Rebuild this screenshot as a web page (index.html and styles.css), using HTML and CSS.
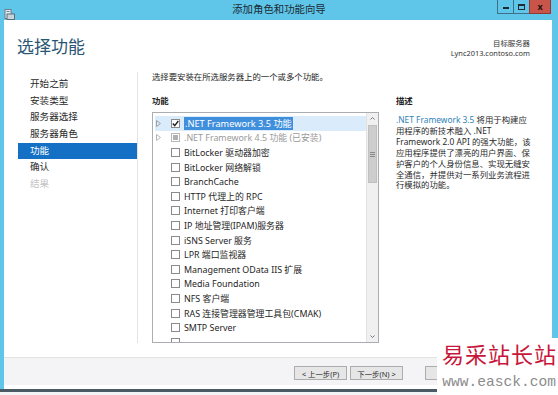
FILE: index.html
```html
<!DOCTYPE html>
<html lang="zh-CN">
<head>
  <meta charset="UTF-8">
  <title>添加角色和功能向导</title>
  <link rel="stylesheet" href="styles.css">
</head>
<body>
  <div class="window">
    <div class="titlebar">
      <div class="app-icon">
        <svg width="11" height="11" viewBox="0 0 11 11">
          <rect x="1" y="0.5" width="6" height="9" fill="#e9eef2" stroke="#6b7f8c" stroke-width="1"/>
          <rect x="3" y="5" width="7.5" height="5.5" fill="#c9d3da" stroke="#5d6f7b" stroke-width="1"/>
          <line x1="2.5" y1="2.5" x2="5.5" y2="2.5" stroke="#6b7f8c"/>
        </svg>
      </div>
      <div class="title">添加角色和功能向导</div>
      <div class="caption-btns">
        <span class="cap cap-min"><i></i></span>
        <span class="cap cap-max"><i></i></span>
        <span class="cap cap-close">x</span>
      </div>
    </div>

    <div class="client">
      <div class="header">
        <h1>选择功能</h1>
        <div class="target">
          <div>目标服务器</div>
          <div>Lync2013.contoso.com</div>
        </div>
      </div>

      <div class="main">
        <ul class="nav">
          <li>开始之前</li>
          <li>安装类型</li>
          <li>服务器选择</li>
          <li>服务器角色</li>
          <li class="active">功能</li>
          <li>确认</li>
          <li class="disabled">结果</li>
        </ul>

        <div class="content">
          <p class="intro">选择要安装在所选服务器上的一个或多个功能。</p>
          <div class="columns">
            <div class="features">
              <div class="label">功能</div>
              <div class="listbox">
                <div class="rows">
                  <div class="row selected">
                    <span class="exp"><svg width="5" height="7" viewBox="0 0 5 7"><path d="M0.5 0.5 L4.5 3.5 L0.5 6.5 Z" fill="none" stroke="#a0a0a0"/></svg></span>
                    <span class="cb checked"><svg width="7" height="7" viewBox="0 0 7 7"><path d="M0.8 3.6 L2.7 5.6 L6.3 1" fill="none" stroke="#222" stroke-width="1.4"/></svg></span>
                    <span class="text"><span class="hl">.NET Framework 3.5 功能</span></span>
                  </div>
                  <div class="row installed">
                    <span class="exp"><svg width="5" height="7" viewBox="0 0 5 7"><path d="M0.5 0.5 L4.5 3.5 L0.5 6.5 Z" fill="none" stroke="#b5b5b5"/></svg></span>
                    <span class="cb partial"><i></i></span>
                    <span class="text">.NET Framework 4.5 功能 (已安装)</span>
                  </div>
                  <div class="row"><span class="exp"></span><span class="cb"></span><span class="text">BitLocker 驱动器加密</span></div>
                  <div class="row"><span class="exp"></span><span class="cb"></span><span class="text">BitLocker 网络解锁</span></div>
                  <div class="row"><span class="exp"></span><span class="cb"></span><span class="text">BranchCache</span></div>
                  <div class="row"><span class="exp"></span><span class="cb"></span><span class="text">HTTP 代理上的 RPC</span></div>
                  <div class="row"><span class="exp"></span><span class="cb"></span><span class="text">Internet 打印客户端</span></div>
                  <div class="row"><span class="exp"></span><span class="cb"></span><span class="text">IP 地址管理(IPAM)服务器</span></div>
                  <div class="row"><span class="exp"></span><span class="cb"></span><span class="text">iSNS Server 服务</span></div>
                  <div class="row"><span class="exp"></span><span class="cb"></span><span class="text">LPR 端口监视器</span></div>
                  <div class="row"><span class="exp"></span><span class="cb"></span><span class="text">Management OData IIS 扩展</span></div>
                  <div class="row"><span class="exp"></span><span class="cb"></span><span class="text">Media Foundation</span></div>
                  <div class="row"><span class="exp"></span><span class="cb"></span><span class="text">NFS 客户端</span></div>
                  <div class="row"><span class="exp"></span><span class="cb"></span><span class="text">RAS 连接管理器管理工具包(CMAK)</span></div>
                  <div class="row"><span class="exp"></span><span class="cb"></span><span class="text">SMTP Server</span></div>
                  <div class="row"><span class="exp"></span><span class="cb"></span></div>
                </div>
                <div class="scrollbar">
                  <div class="sb-btn"><svg width="5" height="3" viewBox="0 0 5 3"><path d="M0.5 2.5 L2.5 0.5 L4.5 2.5" fill="none" stroke="#777"/></svg></div>
                  <div class="sb-thumb"><i></i><i></i><i></i></div>
                  <div class="sb-btn sb-down"><svg width="5" height="3" viewBox="0 0 5 3"><path d="M0.5 0.5 L2.5 2.5 L4.5 0.5" fill="none" stroke="#777"/></svg></div>
                </div>
              </div>
            </div>

            <div class="desc">
              <div class="label">描述</div>
              <p class="desc-text"><span class="link">.NET Framework 3.5</span> 将用于构建应<br>用程序的新技术融入 .NET<br>Framework 2.0 API 的强大功能，该<br>应用程序提供了漂亮的用户界面、保<br>护客户的个人身份信息、实现无缝安<br>全通信，并提供对一系列业务流程进<br>行模拟的功能。</p>
            </div>
          </div>
        </div>
      </div>

      <div class="footer">
        <button class="btn">&lt; 上一步(P)</button>
        <button class="btn">下一步(N) &gt;</button>
        <button class="btn btn-gap" aria-label="安装"></button>
      </div>
    </div>
  </div>

  <div class="watermark">
    <div class="wm-name">易采站长站</div>
    <div class="wm-url">www.easck.com</div>
  </div>
</body>
</html>
```

FILE: styles.css
```css
body {
  margin: 0;
  width: 558px;
  height: 395px;
  overflow: hidden;
  background: #f2f4f6;
  font-family: "Noto Sans", "Noto Sans CJK SC", sans-serif;
  color: #1e1e1e;
  position: relative;
}

.window {
  width: 558px;
  height: 389px;
  background: #5fc6ea;
  box-shadow: 0 3px 0 #4b5b66;
  display: flex;
  flex-direction: column;
}

/* title bar */
.titlebar {
  height: 20px;
  display: grid;
  grid-template-columns: 1fr auto 1fr;
  align-items: start;
}

.app-icon {
  padding: 3px 0 0 4px;
  height: 11px;
}

.title {
  font-size: 10.4px;
  line-height: 18px;
  color: #1b2a33;
}

.caption-btns {
  display: flex;
  justify-content: flex-end;
  padding-right: 7px;
}

.cap {
  height: 14px;
  box-sizing: border-box;
  display: flex;
  align-items: center;
  justify-content: center;
  border: 1px solid #3d6f86;
  border-top: none;
}

.cap-min,
.cap-max {
  width: 16px;
  border-right: none;
}

.cap-min i {
  width: 6px;
  height: 2px;
  margin-top: 3px;
  background: #1d2b33;
}

.cap-max i {
  width: 5px;
  height: 3px;
  border: 1px solid #1d2b33;
  border-top-width: 2px;
}

.cap-close {
  width: 22px;
  background: #c9544a;
  border-color: #8f3a33;
  color: #2a1212;
  font-size: 9px;
  font-weight: 700;
  line-height: 12px;
}

/* client area */
.client {
  flex: 1;
  margin: 0 6px 0 4px;
  background: #ffffff;
  display: flex;
  flex-direction: column;
}

.header {
  height: 50px;
  box-sizing: border-box;
  padding: 17px 22px 0 13px;
  display: flex;
  justify-content: space-between;
  align-items: flex-start;
}

.header h1 {
  margin: 0;
  font-size: 17px;
  line-height: 20px;
  font-weight: 400;
  color: #2a5673;
}

.target {
  text-align: right;
  font-size: 7.4px;
  line-height: 10px;
  color: #333;
  padding-top: 1px;
}

.main {
  height: 273px;
  display: flex;
  align-items: flex-start;
}

.nav {
  list-style: none;
  margin: 2px 0 0;
  width: 134px;
  height: 271px;
  flex-shrink: 0;
  box-sizing: border-box;
  padding: 4px 0 0 14px;
  border-right: 1px solid #e4e4e4;
}

.nav li {
  height: 16.7px;
  line-height: 16.7px;
  padding-left: 12px;
  font-size: 9.6px;
  color: #2a2a2a;
}

.nav li.active {
  background: #1470c4;
  color: #ffffff;
}

.nav li.disabled {
  color: #c4c4c4;
}

.content {
  flex: 1;
  min-width: 0;
  padding-left: 14px;
  font-size: 8.4px;
}

.intro {
  margin: 0;
  line-height: 12px;
  padding-top: 1px;
}

.columns {
  display: flex;
  gap: 17px;
  margin-top: 12px;
}

.label {
  font-weight: 700;
  line-height: 12px;
  color: #222;
}

.features {
  width: 227px;
  flex-shrink: 0;
}

.listbox {
  margin-top: 5px;
  height: 231px;
  box-sizing: border-box;
  border: 1px solid #abadb3;
  display: flex;
  overflow: hidden;
}

.rows {
  flex: 1;
  min-width: 0;
  padding: 3px 0 0 2px;
  overflow: hidden;
}

.row {
  height: 14.6px;
  display: flex;
  align-items: center;
  font-size: 8.9px;
  color: #262626;
  white-space: nowrap;
}

.row.selected {
  background: #daebfb;
  font-size: 9.2px;
}

.row.installed {
  color: #9a9a9a;
}

.exp {
  width: 15px;
  display: flex;
  padding-left: 1px;
  flex-shrink: 0;
}

.cb {
  width: 9px;
  height: 9px;
  box-sizing: border-box;
  border: 1px solid #8a8a8a;
  background: #ffffff;
  margin-right: 4px;
  display: flex;
  align-items: center;
  justify-content: center;
  flex-shrink: 0;
}

.cb.partial {
  border-color: #b8b8b8;
}

.cb.partial i {
  width: 5px;
  height: 5px;
  background: #b0b0b0;
}

.hl {
  background: #3f8fdc;
  color: #ffffff;
  padding: 0 1px;
}

.scrollbar {
  width: 11px;
  flex-shrink: 0;
  background: #f0f0f0;
  border-left: 1px solid #e2e2e2;
  display: flex;
  flex-direction: column;
  align-items: center;
}

.sb-btn {
  height: 11px;
  width: 100%;
  display: flex;
  align-items: center;
  justify-content: center;
}

.sb-down {
  margin-top: auto;
}

.sb-thumb {
  width: 9px;
  height: 58px;
  margin-top: 1px;
  box-sizing: border-box;
  background: #cdcdcd;
  border: 1px solid #c0c0c0;
  display: flex;
  flex-direction: column;
  align-items: center;
  justify-content: center;
  gap: 1px;
}

.sb-thumb i {
  width: 5px;
  height: 1px;
  background: #8a8a8a;
}

.desc {
  width: 146px;
  min-width: 0;
}

.desc-text {
  margin: 8px 0 0;
  font-size: 8.4px;
  line-height: 10.9px;
  color: #2a2a2a;
  white-space: nowrap;
}

.link {
  color: #2f7fb8;
}

/* footer */
.footer {
  margin-top: 14px;
  height: 28px;
  box-sizing: border-box;
  background: #f4f3f5;
  border-top: 1px solid #e3e3e3;
  display: flex;
  justify-content: flex-start;
  align-items: flex-start;
  gap: 3px;
  padding: 8px 0 0 290px;
}

.btn {
  width: 53px;
  height: 14px;
  padding: 0;
  font-family: inherit;
  font-size: 7.4px;
  color: #2a2a2a;
  background: #e6e6e6;
  border: 1px solid #acacac;
}

.btn-gap {
  margin-left: 19px;
}

/* watermark overlay */
.watermark {
  position: absolute;
  left: 437px;
  top: 338px;
  width: 121px;
  height: 57px;
  background: #ffffff;
  text-align: right;
}

.wm-name {
  font-size: 22px;
  line-height: 24px;
  margin-top: 3px;
  letter-spacing: 1px;
  color: #c8163b;
  font-family: "Noto Sans CJK SC", sans-serif;
  padding-right: 1px;
}

.wm-url {
  font-family: "Liberation Mono", monospace;
  font-size: 14.6px;
  line-height: 15px;
  margin-top: 10px;
  color: #8c8c8c;
  padding-right: 2px;
}
```
